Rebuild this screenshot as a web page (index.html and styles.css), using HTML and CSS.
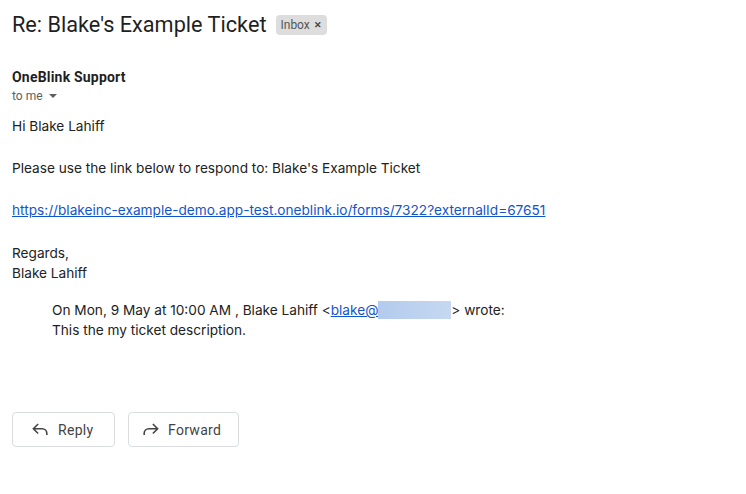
FILE: index.html
```html
<!DOCTYPE html>
<html>
<head>
<meta charset="utf-8">
<link rel="stylesheet" href="styles.css">
</head>
<body>
<div class="page">
  <div class="subject-row">
    <h1 class="subject">Re: Blake's Example Ticket</h1>
    <span class="label">Inbox <span class="label-x">✕</span></span>
  </div>
  <div class="sender">OneBlink Support</div>
  <div class="to">to me <span class="caret"></span></div>
  <div class="body">
    <p class="para">Hi Blake Lahiff</p>
    <p class="para">Please use the link below to respond to: Blake's Example Ticket</p>
    <p class="para para-link"><a class="link" href="#">https://blakeinc-example-demo.app-test.oneblink.io/forms/7322?externalId=67651</a></p>
    <p class="para">Regards,<br>Blake Lahiff</p>
    <div class="quote">
      <div>On Mon, 9 May at 10:00 AM , Blake Lahiff &lt;<a class="link" href="#">blake@</a><span class="redact"></span>&gt; wrote:</div>
      <div>This the my ticket description.</div>
    </div>
  </div>
  <div class="actions">
    <button class="btn btn-reply">
      <svg class="icon" viewBox="0 0 24 24"><path d="M9 5 L3 11 L9 17 M3.5 11 H14 a6 6 0 0 1 6 6 v2" fill="none" stroke="#444" stroke-width="2" stroke-linejoin="miter"/></svg>
      <span>Reply</span>
    </button>
    <button class="btn btn-forward">
      <svg class="icon" viewBox="0 0 24 24"><path d="M15 5 L21 11 L15 17 M20.5 11 H10 a6 6 0 0 0 -6 6 v2" fill="none" stroke="#444" stroke-width="2" stroke-linejoin="miter"/></svg>
      <span>Forward</span>
    </button>
  </div>
</div>
</body>
</html>
```
FILE: styles.css
```css
html, body {
  margin: 0;
  padding: 0;
  background: #fff;
}
.page {
  padding: 0 12px;
  font-family: Inter, "Liberation Sans", sans-serif;
  color: #222;
}
.subject-row {
  display: flex;
  align-items: center;
  gap: 10px;
  height: 48px;
}
.subject {
  margin: 0;
  font-family: Roboto, "Liberation Sans", sans-serif;
  font-weight: 400;
  font-size: 21.7px;
  color: #1f1f1f;
}
.label {
  display: inline-flex;
  align-items: center;
  gap: 4px;
  height: 20px;
  background: #dddddd;
  color: #555;
  font-family: Roboto, sans-serif;
  font-size: 12px;
  border-radius: 4px;
  padding: 0 5px 0 4px;
  margin-top: 1px;
}
.label-x {
  font-size: 9px;
  font-weight: 700;
  color: #444;
}
.sender {
  margin-top: 20px;
  font-family: Roboto, sans-serif;
  font-weight: 700;
  font-size: 14px;
  letter-spacing: 0.2px;
  color: #1f1f1f;
  line-height: 18px;
}
.to {
  font-family: Roboto, sans-serif;
  font-size: 12px;
  color: #5e5e5e;
  line-height: 20px;
  display: flex;
  align-items: center;
  gap: 6px;
}
.caret {
  width: 0;
  height: 0;
  border-left: 4px solid transparent;
  border-right: 4px solid transparent;
  border-top: 4px solid #5e5e5e;
}
.body {
  margin-top: 10px;
  font-size: 13.65px;
  line-height: 20px;
}
.para {
  margin: 0 0 22px;
}
.para-link {
  margin-bottom: 23px;
}
.link {
  color: #1155cc;
  text-decoration: underline;
}
.quote {
  margin-left: 40px;
  margin-top: -5px;
}
.redact {
  display: inline-block;
  width: 73px;
  height: 18px;
  vertical-align: -4px;
  background: linear-gradient(90deg, #b2cbee, #c6d8f1);
}
.actions {
  display: flex;
  gap: 13px;
  margin-top: 72px;
}
.btn {
  display: flex;
  align-items: center;
  box-sizing: border-box;
  height: 35px;
  background: #fff;
  border: 1px solid #dadce0;
  border-radius: 4px;
  font-family: Roboto, sans-serif;
  font-size: 14px;
  color: #444;
  letter-spacing: 0.3px;
}
.btn-reply {
  width: 103px;
  padding: 0 0 0 18px;
  gap: 8px;
}
.btn-forward {
  width: 111px;
  padding: 0 0 0 12px;
  gap: 8px;
}
.icon {
  width: 19px;
  height: 19px;
}
```
